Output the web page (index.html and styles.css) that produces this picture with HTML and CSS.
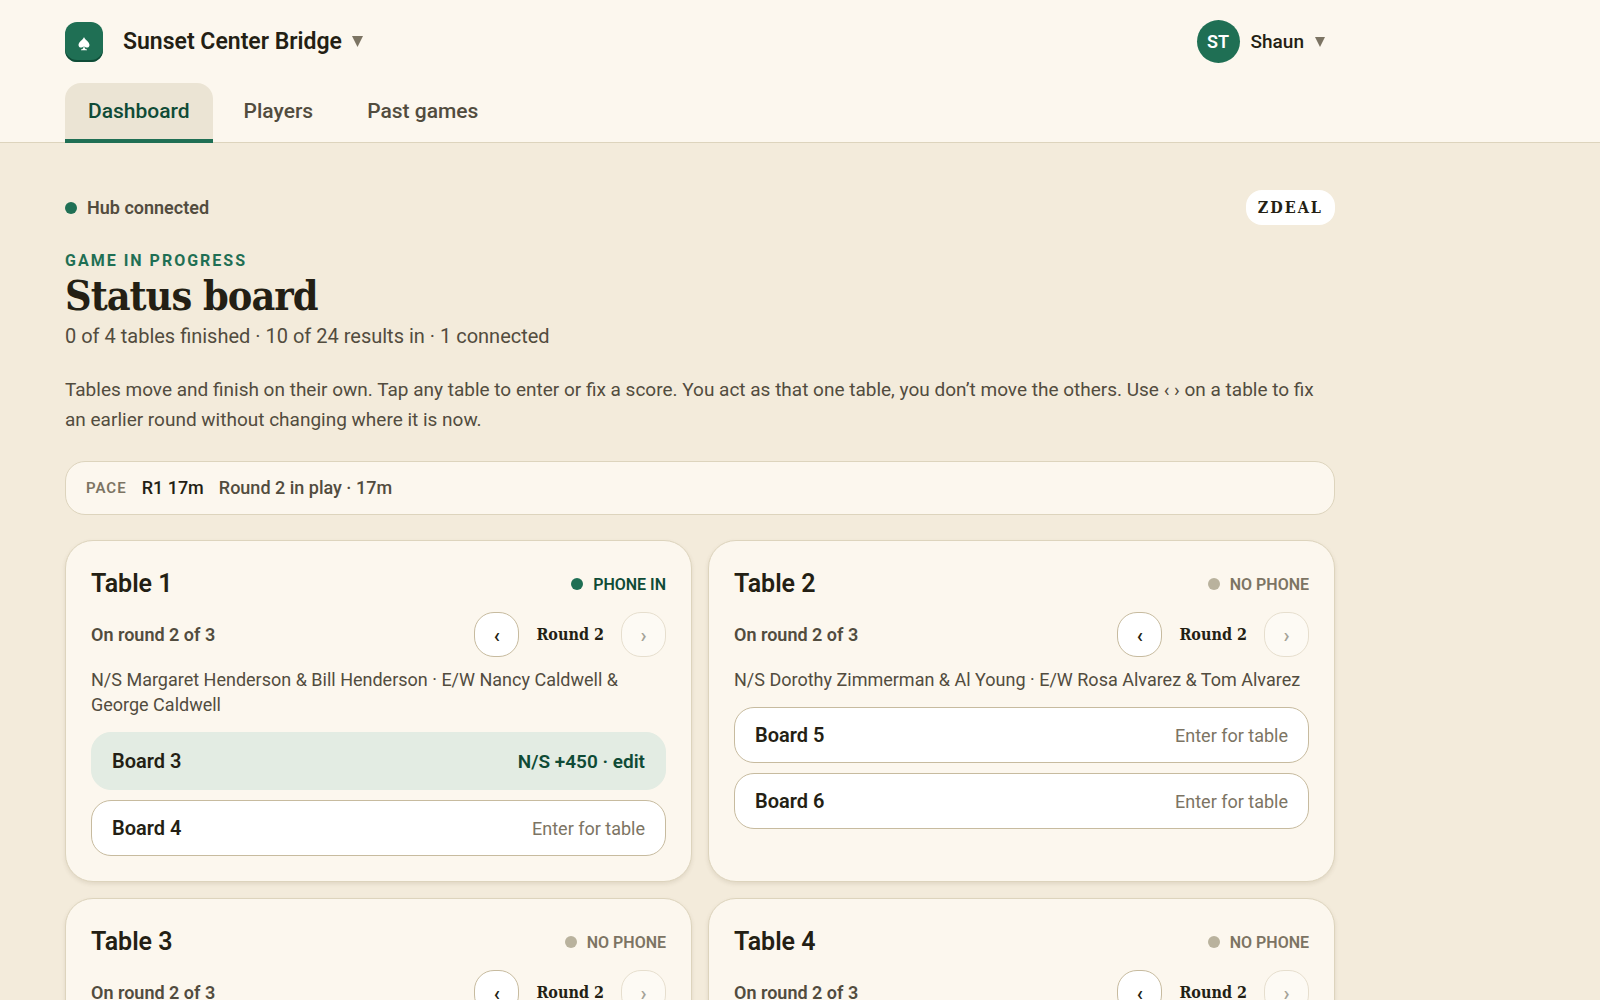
FILE: index.html
```html
<!DOCTYPE html>
<html lang="en">
<head>
    <meta charset="UTF-8" />
    <meta name="viewport" content="width=device-width, initial-scale=1" />
    <title>Status board</title>
    <link rel="stylesheet" href="styles.css">
</head>
<body>

<header class="site-header">
    <div class="wrap header-top">
        <button type="button" class="club-menu">
            <span class="logo">
                <svg width="12" height="14" viewBox="0 0 12 14" fill="#fff" aria-hidden="true"><path d="M6 0C6.800 2.600 11.500 5 11.500 8c0 1.600-1.200 2.600-2.500 2.600-1.100 0-2-.5-2.600-1.400 0 1.800.8 3 2.600 3.300V13.200H3v-.7C4.800 12.200 5.600 11 5.600 9.200 5 10.100 4.100 10.600 3 10.600 1.700 10.600.5 9.600.5 8 .5 5 5.200 2.600 6 0z"/></svg>
            </span>
            <span class="club-name">Sunset Center Bridge</span>
            <svg class="caret" width="11" height="11" viewBox="0 0 11 11" aria-hidden="true"><path d="M0 0h11L5.500 11z"/></svg>
        </button>
        <button type="button" class="user-menu">
            <span class="avatar">ST</span>
            <span>Shaun</span>
            <svg class="caret" width="10" height="10" viewBox="0 0 11 11" aria-hidden="true"><path d="M0 0h11L5.500 11z"/></svg>
        </button>
    </div>
    <nav class="wrap tabs">
        <a class="tab active" href="#">Dashboard</a>
        <a class="tab" href="#">Players</a>
        <a class="tab" href="#">Past games</a>
    </nav>
</header>

<main class="wrap">

    <div class="hub-row">
        <span class="hub"><span class="dot on"></span>Hub connected</span>
        <span class="brand">ZDEAL</span>
    </div>

    <p class="eyebrow">GAME IN PROGRESS</p>
    <h1>Status board</h1>
    <p class="summary">0 of 4 tables finished · 10 of 24 results in · 1 connected</p>

    <p class="help">Tables move and finish on their own. Tap any table to enter or fix a score. You act as that one table, you don’t move the others. Use ‹ › on a table to fix an earlier round without changing where it is now.</p>

    <div class="pace">
        <span class="pace-label">PACE</span>
        <span class="pace-round">R1 17m</span>
        <span>Round 2 in play · 17m</span>
    </div>

    <div class="tables">

        <section class="card">
            <div class="card-head">
                <h2>Table 1</h2>
                <span class="phone in"><span class="dot on"></span>PHONE IN</span>
            </div>
            <div class="round-row">
                <span class="on-round">On round 2 of 3</span>
                <div class="stepper">
                    <button type="button" class="step" aria-label="Previous round">‹</button>
                    <span class="round">Round 2</span>
                    <button type="button" class="step" aria-label="Next round" disabled>›</button>
                </div>
            </div>
            <p class="pairs">N/S Margaret Henderson &amp; Bill Henderson · E/W Nancy Caldwell &amp; George Caldwell</p>
            <div class="boards">
                <button type="button" class="board done"><span class="board-name">Board 3</span><span class="board-action">N/S +450 · edit</span></button>
                <button type="button" class="board"><span class="board-name">Board 4</span><span class="board-action">Enter for table</span></button>
            </div>
        </section>

        <section class="card">
            <div class="card-head">
                <h2>Table 2</h2>
                <span class="phone"><span class="dot"></span>NO PHONE</span>
            </div>
            <div class="round-row">
                <span class="on-round">On round 2 of 3</span>
                <div class="stepper">
                    <button type="button" class="step" aria-label="Previous round">‹</button>
                    <span class="round">Round 2</span>
                    <button type="button" class="step" aria-label="Next round" disabled>›</button>
                </div>
            </div>
            <p class="pairs">N/S Dorothy Zimmerman &amp; Al Young · E/W Rosa Alvarez &amp; Tom Alvarez</p>
            <div class="boards">
                <button type="button" class="board"><span class="board-name">Board 5</span><span class="board-action">Enter for table</span></button>
                <button type="button" class="board"><span class="board-name">Board 6</span><span class="board-action">Enter for table</span></button>
            </div>
        </section>

        <section class="card">
            <div class="card-head">
                <h2>Table 3</h2>
                <span class="phone"><span class="dot"></span>NO PHONE</span>
            </div>
            <div class="round-row">
                <span class="on-round">On round 2 of 3</span>
                <div class="stepper">
                    <button type="button" class="step" aria-label="Previous round">‹</button>
                    <span class="round">Round 2</span>
                    <button type="button" class="step" aria-label="Next round" disabled>›</button>
                </div>
            </div>
        </section>

        <section class="card">
            <div class="card-head">
                <h2>Table 4</h2>
                <span class="phone"><span class="dot"></span>NO PHONE</span>
            </div>
            <div class="round-row">
                <span class="on-round">On round 2 of 3</span>
                <div class="stepper">
                    <button type="button" class="step" aria-label="Previous round">‹</button>
                    <span class="round">Round 2</span>
                    <button type="button" class="step" aria-label="Next round" disabled>›</button>
                </div>
            </div>
        </section>

    </div>

</main>

</body>
</html>
```
FILE: styles.css
```css
:root {
    --sans: Roboto, "Liberation Sans", sans-serif;
    --slab: "DejaVu Serif Condensed", "DejaVu Serif", serif;
    --ink: #241f14;
    --soft: #524c3e;
    --muted: #7c7463;
    --green: #1f6f54;
    --green-dark: #0f4b36;
    --paper: #fcf7ee;
    --line: #ddd4bd;
    --line-dark: #c7bb9f;
}
* {
    box-sizing: border-box;
}
body {
    margin: 0;
    background: #f3ebdb;
    color: var(--ink);
    font-family: var(--sans);
    font-size: 18px;
}
h1, h2, p {
    margin: 0;
}
button {
    font-family: inherit;
    color: inherit;
    cursor: pointer;
}
.wrap {
    max-width: 1400px;
    padding: 0 65px;
}

/* Header */
.site-header {
    background: var(--paper);
    border-bottom: 1px solid var(--line);
}
.header-top {
    display: flex;
    justify-content: space-between;
    align-items: center;
    padding-top: 20px;
}
.club-menu, .user-menu {
    display: flex;
    align-items: center;
    border: 0;
    padding: 0;
    background: none;
}
.club-menu {
    gap: 10px;
    font-size: 23px;
    font-weight: 600;
}
.logo {
    display: flex;
    align-items: center;
    justify-content: center;
    width: 38px;
    height: 40px;
    margin-right: 10px;
    padding-top: 4px;
    border-radius: 12px;
    background: var(--green);
    box-shadow: inset 0 -2px 0 var(--green-dark);
}
.caret {
    fill: var(--muted);
}
.user-menu {
    gap: 11px;
    padding-right: 10px;
    font-size: 19px;
    font-weight: 500;
}
.avatar {
    width: 43px;
    height: 43px;
    border-radius: 50%;
    background: var(--green);
    color: #fff;
    font-size: 18px;
    font-weight: 600;
    line-height: 43px;
    text-align: center;
}
.tabs {
    display: flex;
    gap: 8px;
    margin: 20px 0 -1px;
}
.tab {
    padding: 0 23px;
    border-bottom: 4px solid transparent;
    color: var(--soft);
    font-size: 21px;
    font-weight: 500;
    line-height: 56px;
    text-decoration: none;
}
.tab.active {
    border-bottom-color: var(--green);
    border-radius: 16px 16px 0 0;
    background: #ebe4d4;
    color: var(--green-dark);
}

/* Page heading */
.hub-row {
    display: flex;
    justify-content: space-between;
    align-items: center;
    margin-top: 47px;
}
.hub {
    display: flex;
    align-items: center;
    gap: 10px;
    color: var(--soft);
    font-weight: 600;
}
.dot {
    width: 12px;
    height: 12px;
    border-radius: 50%;
    background: #b9b29d;
}
.dot.on {
    background: var(--green);
}
.brand {
    padding: 0 12px;
    border-radius: 16px;
    background: #fff;
    font-family: var(--slab);
    font-size: 16px;
    font-weight: 700;
    letter-spacing: 2px;
    line-height: 35px;
}
.eyebrow {
    margin-top: 26px;
    color: var(--green);
    font-size: 16px;
    font-weight: 700;
    letter-spacing: 2px;
    line-height: 20px;
}
h1 {
    font-family: var(--slab);
    font-size: 41px;
    font-weight: 700;
    letter-spacing: -1px;
    line-height: 50px;
}
.summary {
    color: var(--soft);
    font-size: 20px;
    line-height: 30px;
}
.help {
    margin-top: 24px;
    color: var(--soft);
    font-size: 19px;
    line-height: 30px;
}

/* Pace strip */
.pace {
    display: flex;
    align-items: center;
    gap: 15px;
    margin-top: 26px;
    padding: 0 20px;
    border: 1px solid var(--line);
    border-radius: 20px;
    background: var(--paper);
    color: var(--soft);
    font-weight: 500;
    line-height: 52px;
}
.pace-label {
    color: var(--muted);
    font-size: 15px;
    font-weight: 600;
    letter-spacing: 1px;
}
.pace-round {
    color: var(--ink);
}

/* Table cards */
.tables {
    display: grid;
    grid-template-columns: 1fr 1fr;
    gap: 16px;
    margin-top: 25px;
    padding-bottom: 40px;
}
.card {
    padding: 25px;
    border: 1px solid var(--line);
    border-radius: 28px;
    background: var(--paper);
    box-shadow: 0 2px 4px rgba(90, 75, 40, 0.12);
}
.card-head, .round-row, .stepper, .phone {
    display: flex;
    align-items: center;
}
.card-head, .round-row {
    justify-content: space-between;
}
h2 {
    font-size: 25px;
    font-weight: 600;
    line-height: 36px;
}
.phone {
    gap: 10px;
    color: var(--muted);
    font-size: 16px;
    font-weight: 600;
}
.phone.in {
    color: var(--green-dark);
}
.round-row {
    margin-top: 10px;
}
.on-round {
    color: var(--soft);
    font-weight: 600;
}
.stepper {
    gap: 17px;
}
.step {
    width: 45px;
    height: 45px;
    padding: 0;
    border: 1px solid var(--line-dark);
    border-radius: 20px;
    background: #fff;
    font-size: 20px;
    font-weight: 600;
}
.step:disabled {
    opacity: 0.4;
    cursor: default;
}
.round {
    font-family: var(--slab);
    font-size: 16px;
    font-weight: 700;
}
.pairs {
    margin-top: 10px;
    color: var(--soft);
    line-height: 25px;
}
.boards {
    display: grid;
    gap: 10px;
    margin-top: 15px;
}
.board {
    display: flex;
    justify-content: space-between;
    align-items: center;
    min-height: 56px;
    padding: 0 20px;
    border: 1px solid var(--line-dark);
    border-radius: 20px;
    background: #fff;
}
.board-name {
    font-size: 20px;
    font-weight: 600;
}
.board-action {
    color: var(--muted);
    font-size: 18px;
    font-weight: 400;
}
.board.done {
    min-height: 58px;
    border-color: #e3ece3;
    background: #e3ece3;
}
.board.done .board-action {
    color: var(--green-dark);
    font-size: 19px;
    font-weight: 600;
}
```
